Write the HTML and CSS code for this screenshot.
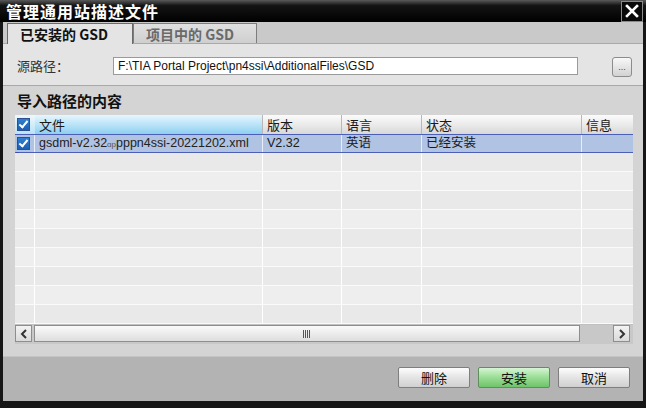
FILE: index.html
```html
<!DOCTYPE html>
<html lang="zh-CN">
<head>
    <meta charset="UTF-8">
    <title>管理通用站描述文件</title>
    <link rel="stylesheet" href="styles.css">
</head>
<body>
    <div class="window">
        <div class="titlebar">
            <span class="title">管理通用站描述文件</span>
            <span class="close-btn">
                <svg width="14" height="14" viewBox="0 0 14 14"><path d="M2 2 L12 12 M12 2 L2 12" stroke="#fff" stroke-width="2.6" stroke-linecap="square"/></svg>
            </span>
        </div>

        <div class="frame">
            <div class="tabs">
                <div class="tab active">已安装的 GSD</div>
                <div class="tab">项目中的 GSD</div>
            </div>

            <div class="source-row">
                <span class="source-label">源路径：</span>
                <div class="path-input">F:\TIA Portal Project\pn4ssi\AdditionalFiles\GSD</div>
                <div class="browse-btn">...</div>
            </div>

            <div class="section">
                <h2 class="section-title">导入路径的内容</h2>
                <div class="grid">
                    <div class="grid-row header">
                        <div class="cell col-check"><span class="checkbox"></span></div>
                        <div class="cell col-file sorted">文件</div>
                        <div class="cell col-ver">版本</div>
                        <div class="cell col-lang">语言</div>
                        <div class="cell col-state">状态</div>
                        <div class="cell col-info">信息</div>
                    </div>
                    <div class="grid-row selected">
                        <div class="cell col-check"><span class="checkbox"></span></div>
                        <div class="cell col-file">gsdml-v2.32<span class="tiny">ɑp</span>pppn4ssi-20221202.xml</div>
                        <div class="cell col-ver">V2.32</div>
                        <div class="cell col-lang">英语</div>
                        <div class="cell col-state">已经安装</div>
                        <div class="cell col-info"></div>
                        <span class="focus-mark"></span>
                    </div>
                    <div class="grid-row empty"><div class="cell col-check"></div><div class="cell col-file"></div><div class="cell col-ver"></div><div class="cell col-lang"></div><div class="cell col-state"></div><div class="cell col-info"></div></div>
                    <div class="grid-row empty"><div class="cell col-check"></div><div class="cell col-file"></div><div class="cell col-ver"></div><div class="cell col-lang"></div><div class="cell col-state"></div><div class="cell col-info"></div></div>
                    <div class="grid-row empty"><div class="cell col-check"></div><div class="cell col-file"></div><div class="cell col-ver"></div><div class="cell col-lang"></div><div class="cell col-state"></div><div class="cell col-info"></div></div>
                    <div class="grid-row empty"><div class="cell col-check"></div><div class="cell col-file"></div><div class="cell col-ver"></div><div class="cell col-lang"></div><div class="cell col-state"></div><div class="cell col-info"></div></div>
                    <div class="grid-row empty"><div class="cell col-check"></div><div class="cell col-file"></div><div class="cell col-ver"></div><div class="cell col-lang"></div><div class="cell col-state"></div><div class="cell col-info"></div></div>
                    <div class="grid-row empty"><div class="cell col-check"></div><div class="cell col-file"></div><div class="cell col-ver"></div><div class="cell col-lang"></div><div class="cell col-state"></div><div class="cell col-info"></div></div>
                    <div class="grid-row empty"><div class="cell col-check"></div><div class="cell col-file"></div><div class="cell col-ver"></div><div class="cell col-lang"></div><div class="cell col-state"></div><div class="cell col-info"></div></div>
                    <div class="grid-row empty"><div class="cell col-check"></div><div class="cell col-file"></div><div class="cell col-ver"></div><div class="cell col-lang"></div><div class="cell col-state"></div><div class="cell col-info"></div></div>
                    <div class="grid-row empty last"><div class="cell col-check"></div><div class="cell col-file"></div><div class="cell col-ver"></div><div class="cell col-lang"></div><div class="cell col-state"></div><div class="cell col-info"></div></div>

                    <div class="hscroll">
                        <div class="scroll-btn">
                            <svg width="8" height="10" viewBox="0 0 8 10"><path d="M6 1 L2 5 L6 9" fill="none" stroke="#333" stroke-width="2"/></svg>
                        </div>
                        <div class="scroll-track">
                            <svg class="grip" width="8" height="8" viewBox="0 0 8 8"><path d="M0.5 0 V8 M2.5 0 V8 M4.5 0 V8 M6.5 0 V8" stroke="#555" stroke-width="1"/></svg>
                        </div>
                        <div class="scroll-gap"></div>
                        <div class="scroll-btn">
                            <svg width="8" height="10" viewBox="0 0 8 10"><path d="M2 1 L6 5 L2 9" fill="none" stroke="#333" stroke-width="2"/></svg>
                        </div>
                    </div>
                </div>
            </div>

            <div class="footer">
                <div class="btn">删除</div>
                <div class="btn primary">安装</div>
                <div class="btn">取消</div>
            </div>
        </div>
    </div>
</body>
</html>
```

FILE: styles.css
```css
body {
    margin: 0;
    background-color: #161616;
    font-family: "Liberation Sans", "Noto Sans CJK SC", sans-serif;
    font-size: 12px;
    color: #1a1a1a;
}

.window {
    width: 646px;
    height: 408px;
    display: flex;
    flex-direction: column;
    background-color: #161616;
    overflow: hidden;
}

.titlebar {
    height: 22px;
    display: flex;
    align-items: center;
    justify-content: space-between;
    background: linear-gradient(#5a5a5a, #141414 25%, #000 100%);
    flex-shrink: 0;
}

.title {
    padding-left: 6px;
    color: #fff;
    font-family: "Noto Sans CJK SC", sans-serif;
    font-weight: bold;
    font-size: 16px;
    line-height: 22px;
    height: 22px;
    letter-spacing: 1px;
}

.close-btn {
    width: 20px;
    height: 19px;
    margin-right: 3px;
    border: 1px solid #8a8a8a;
    display: flex;
    align-items: center;
    justify-content: center;
    background-color: #0a0a0a;
}

.frame {
    flex: 1;
    margin: 0 3px 8px 3px;
    display: flex;
    flex-direction: column;
    background-color: #e4e4e4;
}

/* вкладки */
.tabs {
    height: 21px;
    display: flex;
    align-items: flex-end;
    padding-left: 4px;
    background-color: #c9c9c9;
    border-bottom: 1px solid #a9a9a9;
    flex-shrink: 0;
}

.tab {
    width: 124px;
    height: 20px;
    line-height: 20px;
    padding-left: 12px;
    box-sizing: border-box;
    font-family: "Noto Sans CJK SC", sans-serif;
    font-weight: bold;
    font-size: 14px;
    color: #6a6a6a;
    background: linear-gradient(#e0e0e0, #cfcfcf);
    border: 1px solid #7d7d7d;
    border-bottom: none;
}

.tab.active {
    width: 126px;
    height: 21px;
    margin-bottom: -1px;
    color: #111;
    background: #e4e4e4;
    border-color: #6a6a6a;
}

.source-row {
    height: 42px;
    display: flex;
    align-items: flex-start;
    padding: 13px 11px 0 14px;
    box-sizing: border-box;
    border-bottom: 1px solid #a8a8a8;
    flex-shrink: 0;
}

.source-label {
    width: 96px;
    line-height: 18px;
    font-family: "Noto Sans CJK SC", sans-serif;
    font-size: 13px;
    color: #333;
}

.path-input {
    width: 465px;
    height: 18px;
    box-sizing: border-box;
    padding-left: 4px;
    line-height: 16px;
    font-size: 12px;
    background-color: #fff;
    border: 1px solid #9a9a9a;
    color: #111;
}

.browse-btn {
    width: 20px;
    height: 20px;
    margin-left: auto;
    box-sizing: border-box;
    border: 1px solid #8c8c8c;
    border-radius: 3px;
    background: linear-gradient(#f8f8f8, #d2d2d2);
    font-size: 9px;
    line-height: 18px;
    text-align: center;
    color: #444;
}

.section {
    flex: 1;
    padding: 5px 10px 12px 12px;
    background-color: #d4d4d4;
}

.section-title {
    margin: 0 0 4px 2px;
    height: 20px;
    line-height: 20px;
    font-family: "Noto Sans CJK SC", sans-serif;
    font-weight: bold;
    font-size: 15px;
    color: #111;
}

.grid {
    width: 618px;
    background-color: #ececec;
}

.grid-row {
    display: flex;
    height: 19px;
    position: relative;
}

.cell {
    box-sizing: border-box;
    height: 100%;
    padding-left: 4px;
    line-height: 19px;
    border-right: 1px solid #fff;
    white-space: nowrap;
    overflow: hidden;
    font-family: "Liberation Sans", "Noto Sans CJK SC", sans-serif;
    font-size: 12.5px;
}

.col-check { width: 20px; padding-left: 2px; display: flex; align-items: center; }
.col-file { width: 228px; }
.col-ver { width: 79px; }
.col-lang { width: 80px; }
.col-state { width: 160px; }
.col-info { width: 51px; border-right: none; }

.header .cell {
    background: linear-gradient(#fbfbfb, #e9e9e9 55%, #d8d8d8);
    border-right: 1px solid #b8b8b8;
    font-family: "Noto Sans CJK SC", sans-serif;
    font-size: 13px;
}

.header .col-check {
    background: linear-gradient(#eef8fd, #b8e2f6);
    border-right: none;
}

.header .cell.sorted {
    background: linear-gradient(#e6f6fd, #b6e2f7 55%, #8ccff0);
}

.header .col-info { border-right: none; }

.checkbox {
    width: 13px;
    height: 13px;
    box-sizing: border-box;
    border: 1px solid #2f4f8f;
    background: linear-gradient(#2f7fd0, #1e5fb0);
    position: relative;
}

.checkbox::after {
    content: "";
    position: absolute;
    left: 3px;
    top: 0px;
    width: 3px;
    height: 7px;
    border: solid #fff;
    border-width: 0 2px 2px 0;
    transform: rotate(40deg);
}

.selected {
    background-color: #b1c3e2;
    border-top: 1px solid #4a5fb5;
    border-bottom: 1px solid #4a5fb5;
    height: 17px;
}

.selected .cell {
    line-height: 17px;
    border-right-color: #e8eef8;
}

.selected .col-file {
    color: #222;
}

.tiny {
    font-size: 8px;
    color: #555;
}

.focus-mark {
    position: absolute;
    left: 1px;
    bottom: -3px;
    width: 3px;
    height: 3px;
    background-color: #3a4fb0;
}

.empty:nth-child(odd) { background-color: #e9e9e9; }
.empty:nth-child(even) { background-color: #eeeeee; }

.empty .cell {
    border-bottom: 1px solid #fafafa;
}

.hscroll {
    display: flex;
    height: 19px;
    background-color: #c8c8c8;
    border-top: 1px solid #c0c0c0;
}

.scroll-btn {
    width: 17px;
    height: 17px;
    margin-top: 0;
    box-sizing: border-box;
    border: 1px solid #8e8e8e;
    background: linear-gradient(#f3f3f3, #dadada);
    display: flex;
    align-items: center;
    justify-content: center;
}

.scroll-track {
    width: 546px;
    height: 17px;
    margin-left: 2px;
    box-sizing: border-box;
    border: 1px solid #8e8e8e;
    background: linear-gradient(#fafafa, #dedede);
    display: flex;
    align-items: center;
    justify-content: center;
}

.scroll-gap {
    width: 33px;
}

.footer {
    height: 45px;
    flex-shrink: 0;
    display: flex;
    justify-content: flex-end;
    align-items: flex-start;
    gap: 8px;
    padding: 10px 13px 0 0;
    box-sizing: border-box;
    background-color: #b3b3b3;
    border-top: 1px solid #c4c4c4;
}

.btn {
    width: 72px;
    height: 21px;
    box-sizing: border-box;
    border: 1px solid #7e7e7e;
    border-radius: 2px;
    background: linear-gradient(#fdfdfd, #e4e4e4 50%, #d0d0d0);
    text-align: center;
    line-height: 19px;
    font-family: "Noto Sans CJK SC", sans-serif;
    font-size: 13px;
    color: #111;
}

.btn.primary {
    background: linear-gradient(#d8f5d6, #9fe09a 45%, #6ec36a);
    border-color: #5f8f5c;
}
```
